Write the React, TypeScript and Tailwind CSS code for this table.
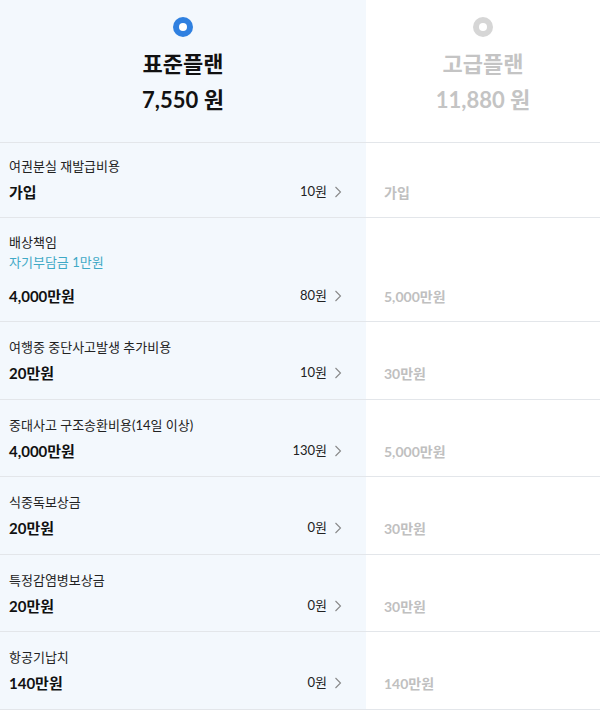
import React from "react";

type Row = { label: string; sub?: string; value: string; price: string; other: string };

const rows: Row[] = [
  { label: "여권분실 재발급비용", value: "가입", price: "10원", other: "가입" },
  { label: "배상책임", sub: "자기부담금 1만원", value: "4,000만원", price: "80원", other: "5,000만원" },
  { label: "여행중 중단사고발생 추가비용", value: "20만원", price: "10원", other: "30만원" },
  { label: "중대사고 구조송환비용(14일 이상)", value: "4,000만원", price: "130원", other: "5,000만원" },
  { label: "식중독보상금", value: "20만원", price: "0원", other: "30만원" },
  { label: "특정감염병보상금", value: "20만원", price: "0원", other: "30만원" },
  { label: "항공기납치", value: "140만원", price: "0원", other: "140만원" },
];

const padTop = ["pt-[14px]", "pt-[15px]", "pt-[16px]", "pt-[16px]", "pt-[16px]", "pt-[16px]", "pt-[16px]"];
const padBot = ["pb-[14px]", "pb-[14px]", "pb-[15px]", "pb-[14px]", "pb-[15px]", "pb-[14px]", "pb-[15px]"];

function Radio({ active }: { active: boolean }) {
  return (
    <div
      className={
        "w-[20px] h-[20px] rounded-full flex items-center justify-center " +
        (active ? "bg-[#2f80e0]" : "bg-[#d6d6d6]")
      }
    >
      <div className="w-[8px] h-[8px] rounded-full bg-white" />
    </div>
  );
}

function Chevron() {
  return (
    <svg width="8" height="12" viewBox="0 0 8 12" className="ml-[7px]">
      <path d="M1.5 1 L6.5 6 L1.5 11" fill="none" stroke="#888" strokeWidth="1.1" />
    </svg>
  );
}

export default function App() {
  return (
    <div
      className="w-[600px] h-[713px] overflow-hidden bg-white text-[#111]"
      style={{ fontFamily: 'Lato, "Noto Sans CJK KR", sans-serif' }}
    >
      <div className="grid grid-cols-[366px_1fr] h-[143px] border-b border-[#e3e6ea]">
        <div className="bg-[#f3f8fd] flex flex-col items-center pt-[17px]">
          <Radio active />
          <div className="mt-[14px] text-[22px] font-bold leading-[26px]">표준플랜</div>
          <div className="mt-[10px] text-[22px] font-bold leading-[26px]">7,550 원</div>
        </div>
        <div className="flex flex-col items-center pt-[17px] text-[#c4c4c4]">
          <Radio active={false} />
          <div className="mt-[14px] text-[22px] font-bold leading-[26px]">고급플랜</div>
          <div className="mt-[10px] text-[22px] font-bold leading-[26px]">11,880 원</div>
        </div>
      </div>
      {rows.map((r, i) => (
        <div key={i} className="grid grid-cols-[366px_1fr] border-b border-[#e3e6ea]">
          <div className={"bg-[#f3f8fd] pl-[9px] pr-[24px] " + padTop[i] + " " + padBot[i]}>
            <div className="text-[13px] leading-[18px] text-[#222]">{r.label}</div>
            {r.sub && (
              <div className="text-[13px] leading-[18px] text-[#3fa9c6] mt-[2px] mb-[14px]">{r.sub}</div>
            )}
            <div className="flex items-center justify-between mt-[6px] h-[22px]">
              <span className="text-[15px] font-bold">{r.value}</span>
              <span className="flex items-center text-[13px] text-[#222]">
                {r.price}
                <Chevron />
              </span>
            </div>
          </div>
          <div className={"flex flex-col justify-end pl-[18px] " + padBot[i]}>
            <div className="h-[22px] flex items-center text-[14px] text-[#c0c0c0] font-bold">{r.other}</div>
          </div>
        </div>
      ))}
    </div>
  );
}
